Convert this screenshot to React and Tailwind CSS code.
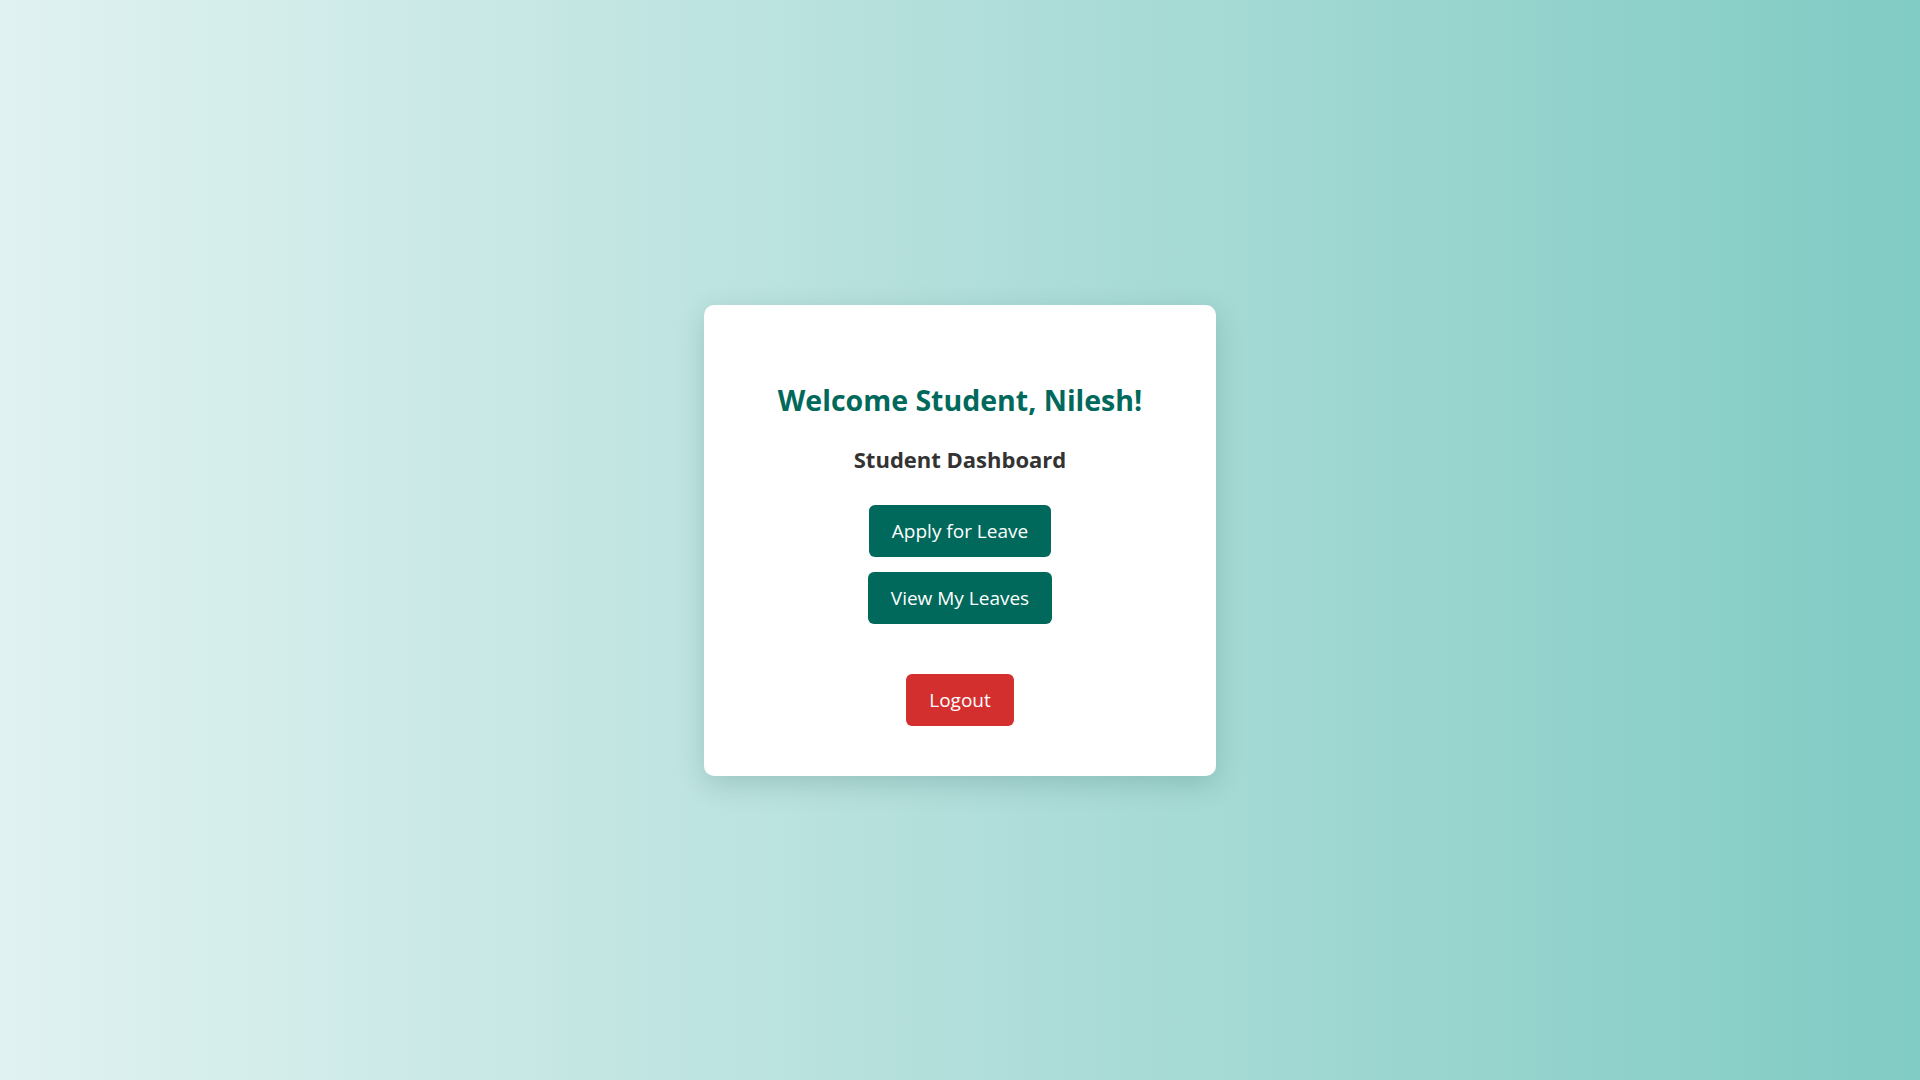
export default function App() {
  const handleLogout = () => {};

  return (
    <div
      className="min-h-screen w-full flex items-center justify-center bg-gradient-to-r from-[#e0f2f1] to-[#80cbc4]"
      style={{ fontFamily: '"Open Sans", "Noto Sans", sans-serif' }}
    >
      <div className="w-[512px] h-[471px] bg-white rounded-[10px] shadow-[0_8px_28px_rgba(0,60,55,0.18)] flex flex-col items-center pt-[77px]">
        <h2 className="text-[28.5px] leading-[36px] font-bold text-[#00695c]">
          Welcome Student, Nilesh!
        </h2>
        <h3 className="mt-[26px] text-[22px] leading-[30px] font-bold text-[#333333]">
          Student Dashboard
        </h3>

        <div className="mt-[31px] flex flex-col items-center gap-[15px]">
          <button className="w-[182px] h-[52px] pt-[1px] rounded-[6px] bg-[#00695c] text-white text-[19px]">
            Apply for Leave
          </button>
          <button className="w-[184px] h-[52px] pt-[1px] rounded-[6px] bg-[#00695c] text-white text-[19px]">
            View My Leaves
          </button>
        </div>

        <button
          onClick={handleLogout}
          className="mt-[50px] w-[108px] h-[52px] pt-[1px] rounded-[6px] bg-[#d32f2f] text-white text-[19px]"
        >
          Logout
        </button>
      </div>
    </div>
  );
}
